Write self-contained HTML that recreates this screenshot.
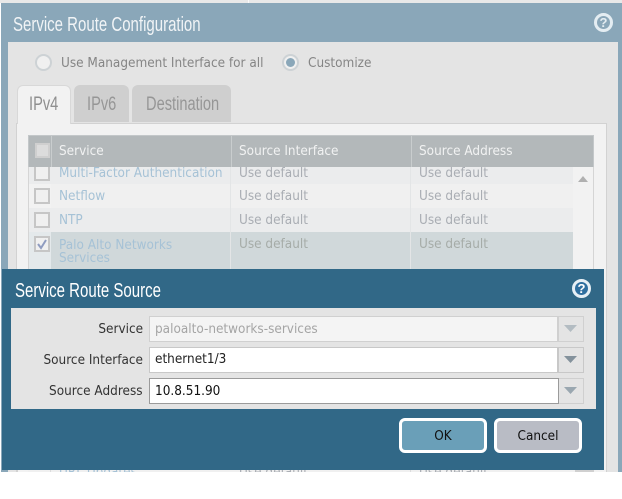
<!DOCTYPE html>
<html><head><meta charset="utf-8">
<style>
html,body{margin:0;padding:0;background:#fff;}
#p{position:relative;width:622px;height:499px;overflow:hidden;background:#fff;font-family:"DejaVu Sans",sans-serif;font-size:13px;}
#p div{position:absolute;box-sizing:border-box;}
.t{white-space:nowrap;line-height:18px;transform-origin:0 0;transform:scaleX(.93);}
.r{transform-origin:100% 0;}
.m{transform-origin:50% 0;}
.c{transform:scaleX(.75);font-family:"Liberation Sans",sans-serif;}
.d{transform:scaleX(.77);font-family:"Liberation Sans",sans-serif;}
.svc{color:#a6c2d6;}
.def{color:#a9adb3;}
.cb{width:16px;height:16px;background:#f0f0f0;border:2px solid #c6c6c6;}
svg{position:absolute;}
</style></head>
<body><div id="p">
<div style="left:0;top:0;width:622px;height:3px;background:#e8e8e8"></div>
<div style="left:248px;top:0;width:1px;height:3px;background:#fafafa"></div>
<div style="left:1px;top:3px;width:621px;height:469px;background:#8aa7b9"></div>
<div style="left:8px;top:42px;width:610px;height:430px;background:#e4e4e4"></div>
<div class="t c" style="left:13px;top:14px;font-size:20px;line-height:22px;color:#f1f4f6">Service Route Configuration</div>
<svg style="left:593px;top:12px" width="22" height="22"><circle cx="10.500" cy="10.500" r="8" fill="#8aa7b9" stroke="#e4edf2" stroke-width="3"/><text x="10.500" y="15" text-anchor="middle" font-family="Liberation Sans" font-weight="bold" font-size="13" fill="#e4edf2">?</text></svg>

<div style="left:35px;top:54px;width:17px;height:17px;border-radius:50%;background:#f0f0f0;border:2px solid #cdd2d5"></div>
<div class="t" style="left:61px;top:55px;color:#858585">Use Management Interface for all</div>
<div style="left:282px;top:54px;width:17px;height:17px;border-radius:50%;background:#f0f0f0;border:2px solid #cdd2d5"></div>
<div style="left:286px;top:58px;width:9px;height:9px;border-radius:50%;background:#8aa7b9"></div>
<div class="t" style="left:308px;top:55px;color:#858585">Customize</div>

<div style="left:16px;top:123px;width:591px;height:349px;background:#f2f2f2;border:1px solid #d2d2d2;border-bottom:0"></div>
<div style="left:17px;top:85px;width:54px;height:39px;background:#f2f2f2;border:1px solid #d8d8d8;border-bottom:0;border-radius:6px 6px 0 0"></div>
<div style="left:74px;top:85px;width:55px;height:37px;background:#cfcfcf;border-radius:6px 6px 0 0"></div>
<div style="left:132px;top:85px;width:99px;height:37px;background:#cfcfcf;border-radius:6px 6px 0 0"></div>
<div class="t d" style="left:29px;top:94px;font-size:19px;line-height:22px;color:#8f8f8f">IPv4</div>
<div class="t d" style="left:87px;top:94px;font-size:19px;line-height:22px;color:#969696">IPv6</div>
<div class="t d" style="left:146px;top:94px;font-size:19px;line-height:22px;color:#969696">Destination</div>

<div style="left:28px;top:135px;width:566px;height:337px;border:1px solid #d5d5d5;border-top:0;background:#f2f2f2"></div>
<div style="left:51px;top:167px;width:522px;height:72px;background:#f0f0f0"></div>
<div style="left:29px;top:167px;width:544px;height:17px;background:#ebeced"></div>
<div style="left:29px;top:208px;width:544px;height:24px;background:#ebeced"></div>
<div style="left:29px;top:232px;width:22px;height:37px;background:#e4e9eb"></div>
<div style="left:51px;top:232px;width:522px;height:37px;background:#d0d8da"></div>
<div style="left:230px;top:167px;width:1px;height:102px;background:#e3e5e6"></div>
<div style="left:410px;top:167px;width:1px;height:102px;background:#e3e5e6"></div>

<div class="cb" style="left:34px;top:165px"></div>
<div class="cb" style="left:34px;top:188px"></div>
<div class="cb" style="left:34px;top:212px"></div>
<div class="cb" style="left:34px;top:236px"></div>
<svg style="left:36px;top:238px" width="12" height="12"><path d="M2 6 L5 10 L10 2" fill="none" stroke="#8f9cc0" stroke-width="2"/></svg>

<div style="left:28px;top:135px;width:566px;height:32px;background:#b3b8ba;border:1px solid #c3c7c9;border-bottom:0"></div>
<div style="left:51px;top:136px;width:1px;height:31px;background:#c9cdce"></div>
<div style="left:231px;top:136px;width:1px;height:31px;background:#c9cdce"></div>
<div style="left:411px;top:136px;width:1px;height:31px;background:#c9cdce"></div>
<div style="left:35px;top:143px;width:15px;height:15px;background:#dcdcdc;border:2px solid #cfcfcf"></div>
<div class="t" style="left:59px;top:143px;color:#f1f2f2">Service</div>
<div class="t" style="left:239px;top:143px;color:#f1f2f2">Source Interface</div>
<div class="t" style="left:419px;top:143px;color:#f1f2f2">Source Address</div>

<div class="t svc" style="left:59px;top:165px">Multi-Factor Authentication</div>
<div class="t def" style="left:239px;top:165px">Use default</div>
<div class="t def" style="left:419px;top:165px">Use default</div>
<div class="t svc" style="left:59px;top:188px">Netflow</div>
<div class="t def" style="left:239px;top:188px">Use default</div>
<div class="t def" style="left:419px;top:188px">Use default</div>
<div class="t svc" style="left:59px;top:212px">NTP</div>
<div class="t def" style="left:239px;top:212px">Use default</div>
<div class="t def" style="left:419px;top:212px">Use default</div>
<div class="t svc" style="left:59px;top:239px;line-height:13px">Palo Alto Networks<br>Services</div>
<div class="t" style="left:239px;top:236px;color:#a6aca8">Use default</div>
<div class="t" style="left:419px;top:236px;color:#a6aca8">Use default</div>
<svg style="left:578px;top:176px" width="11" height="7"><path d="M0 6 L5 0 L10 6Z" fill="#b0b0b0"/></svg>

<div style="left:28px;top:465px;width:566px;height:7px;background:#f0f0f0"></div>
<div style="left:17px;top:465px;width:1px;height:7px;background:#d2d2d2"></div>
<div style="left:50px;top:465px;width:1px;height:7px;background:#dcdcdc"></div>
<div style="left:410px;top:465px;width:1px;height:7px;background:#dcdcdc"></div>
<div style="left:575px;top:465px;width:19px;height:7px;background:#d0d0d0"></div>
<div style="left:0;top:465px;width:622px;height:7px;overflow:hidden">
<div class="t svc" style="left:59px;top:-1px">URL Updates</div>
<div class="t def" style="left:239px;top:-1px">Use default</div>
<div class="t def" style="left:419px;top:-1px">Use default</div>
</div>
<div style="left:2px;top:269px;width:602px;height:201px;background:#316887"></div>
<div class="t c" style="left:15px;top:280px;font-size:20px;line-height:22px;color:#fff">Service Route Source</div>
<svg style="left:571px;top:278px" width="22" height="22"><circle cx="10.500" cy="10.500" r="8" fill="#2f6f9f" stroke="#e6eff5" stroke-width="3"/><text x="10.500" y="15" text-anchor="middle" font-family="Liberation Sans" font-weight="bold" font-size="13" fill="#fff">?</text></svg>

<div style="left:11px;top:308px;width:585px;height:101px;background:#e4e4e4"></div>
<div class="t r" style="right:479px;top:321px;color:#333">Service</div>
<div class="t r" style="right:479px;top:352px;color:#333">Source Interface</div>
<div class="t r" style="right:479px;top:383px;color:#333">Source Address</div>

<div style="left:149px;top:316px;width:409px;height:26px;background:#f4f4f4;border:1px solid #d0d0d0"></div>
<div style="left:558px;top:316px;width:26px;height:26px;background:#e4e4e4;border:1px solid #d0d0d0"></div>
<div class="t" style="left:155px;top:321px;color:#a5a5a5">paloalto-networks-services</div>
<svg style="left:564px;top:325px" width="14" height="8"><path d="M0 0 H13 L6.500 7Z" fill="#b3bcc2"/></svg>

<div style="left:149px;top:347px;width:409px;height:26px;background:#fff;border:1px solid #c8c8c8"></div>
<div style="left:558px;top:347px;width:26px;height:26px;background:#e4e4e4;border:1px solid #c8c8c8"></div>
<div class="t" style="left:155px;top:351px;color:#222">ethernet1/3</div>
<svg style="left:564px;top:356px" width="14" height="8"><path d="M0 0 H13 L6.500 7Z" fill="#84929c"/></svg>

<div style="left:149px;top:378px;width:410px;height:26px;background:#fff;border:1px solid #9b9b9b"></div>
<div style="left:559px;top:378px;width:25px;height:26px;background:#e4e4e4;border:1px solid #cfcfcf;border-left:0"></div>
<div class="t" style="left:155px;top:383px;color:#111">10.8.51.90</div>
<svg style="left:564px;top:387px" width="14" height="8"><path d="M0 0 H13 L6.500 7Z" fill="#9aa7b0"/></svg>

<div style="left:399px;top:418px;width:88px;height:35px;background:#6a9fb8;border:3px solid #fff;border-radius:6px"></div>
<div class="t m" style="left:399px;top:428px;width:88px;text-align:center;color:#111">OK</div>
<div style="left:494px;top:418px;width:88px;height:35px;background:#b9bcc5;border:3px solid #fff;border-radius:6px"></div>
<div class="t m" style="left:494px;top:428px;width:88px;text-align:center;color:#111">Cancel</div>
</div></body></html>
